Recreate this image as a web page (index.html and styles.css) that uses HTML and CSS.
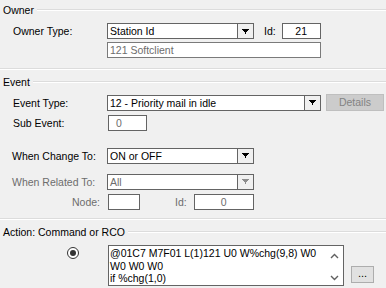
FILE: index.html
```html
<!DOCTYPE html>
<html>
<head>
<meta charset="utf-8">
<link rel="stylesheet" href="styles.css">
</head>
<body>
<div class="panel">
  <div class="legend l-owner"><span class="legend-text">Owner</span><span class="legend-line"></span></div>
  <div class="row r-owner">
    <span class="lbl">Owner Type:</span>
    <div class="combo c-short"><span class="val">Station Id</span><span class="dd"><svg width="7" height="5" viewBox="0 0 7 5"><path d="M0 0h7v1h-1v1h-1v1h-1v2h-1v-2h-1v-1h-1v-1h-1z" fill="#000"/></svg></span></div>
    <span class="lbl-id">Id:</span>
    <div class="field f-id">21</div>
  </div>
  <div class="row r-soft">
    <div class="field f-soft">121 Softclient</div>
  </div>
  <div class="sep s-owner"></div>

  <div class="legend l-event"><span class="legend-text">Event</span><span class="legend-line"></span></div>
  <div class="row r-evtype">
    <span class="lbl">Event Type:</span>
    <div class="combo c-long"><span class="val">12 - Priority mail in idle</span><span class="dd"><svg width="7" height="5" viewBox="0 0 7 5"><path d="M0 0h7v1h-1v1h-1v1h-1v2h-1v-2h-1v-1h-1v-1h-1z" fill="#000"/></svg></span></div>
    <div class="btn-details">Details</div>
  </div>
  <div class="row r-sub">
    <span class="lbl">Sub Event:</span>
    <div class="field f-sub">0</div>
  </div>
  <div class="row r-change">
    <span class="lbl lbl-dark">When Change To:</span>
    <div class="combo c-short"><span class="val">ON or OFF</span><span class="dd"><svg width="7" height="5" viewBox="0 0 7 5"><path d="M0 0h7v1h-1v1h-1v1h-1v2h-1v-2h-1v-1h-1v-1h-1z" fill="#000"/></svg></span></div>
  </div>
  <div class="row r-related">
    <span class="lbl lbl-dis">When Related To:</span>
    <div class="combo c-short disabled"><span class="val">All</span><span class="dd"><svg width="7" height="5" viewBox="0 0 7 5"><path d="M0 0h7v1h-1v1h-1v1h-1v2h-1v-2h-1v-1h-1v-1h-1z" fill="#8c8c8c"/></svg></span></div>
  </div>
  <div class="row r-node">
    <span class="lbl lbl-dis lbl-right">Node:</span>
    <div class="field f-node"></div>
    <span class="lbl-id2">Id:</span>
    <div class="field f-id2">0</div>
  </div>
  <div class="sep s-event"></div>

  <div class="legend l-action"><span class="legend-text">Action: Command or RCO</span><span class="legend-line"></span></div>
  <div class="row r-action">
    <span class="radio-col"><span class="radio"><span class="dot"></span></span></span>
    <div class="memo">
      <div class="memo-text">@01C7 M7F01 L(1)121 U0 W%chg(9,8) W0<br>W0 W0 W0<br>if %chg(1,0)</div>
      <div class="memo-scroll">
        <svg width="9" height="6" viewBox="0 0 9 6"><path d="M1 5L4.5 1.5L8 5" fill="none" stroke="#606060" stroke-width="1.4"/></svg>
        <svg width="9" height="6" viewBox="0 0 9 6"><path d="M1 1L4.5 4.5L8 1" fill="none" stroke="#606060" stroke-width="1.4"/></svg>
      </div>
    </div>
    <div class="btn-more">...</div>
  </div>
</div>
</body>
</html>
```

FILE: styles.css
```css
html, body {
  margin: 0;
  padding: 0;
  background: #f0f0f0;
}
body {
  font-family: "Liberation Sans", Arial, sans-serif;
  font-size: 10.5px;
  color: #000;
  width: 386px;
  height: 288px;
  overflow: hidden;
}
.panel {
  display: flex;
  flex-direction: column;
  width: 386px;
}
.legend {
  display: flex;
  align-items: center;
  height: 12px;
  line-height: 12px;
  padding-left: 3px;
}
.legend-text {
  margin-right: 3px;
  white-space: nowrap;
}
.legend-line {
  flex: 1;
  height: 1px;
  background: #dcdcdc;
  border-bottom: 1px solid #ffffff;
}
.l-owner { margin-top: 4px; }
.l-event { margin-top: 6px; }
.l-action { margin-top: 6px; }
.sep {
  height: 1px;
  background: #dcdcdc;
  border-bottom: 1px solid #ffffff;
}
.s-owner { margin-top: 11px; }
.s-event { margin-top: 8px; }

.row {
  display: flex;
  align-items: center;
  padding-left: 107px;
  position: relative;
}
.lbl {
  position: absolute;
  left: 13px;
  white-space: nowrap;
}
.lbl-dark { left: 12px; }
.lbl-dis { color: #6d6d6d; left: 12px; }
.lbl-right { left: auto; right: calc(386px - 100px); }

.r-owner { margin-top: 7px; height: 16px; }
.r-soft { margin-top: 3px; height: 15px; }
.r-evtype { margin-top: 6px; height: 17px; }
.r-sub { margin-top: 4px; height: 16px; }
.r-change { margin-top: 16px; height: 17px; }
.r-related { margin-top: 9px; height: 17px; }
.r-node { margin-top: 3px; height: 17px; }
.r-action { margin-top: 7px; height: 41px; align-items: flex-start; padding-left: 0; }

.combo {
  display: flex;
  box-sizing: border-box;
  height: 16px;
  border: 1px solid #646464;
  background: #fff;
}
.c-short { width: 147px; }
.c-long { width: 214px; }
.combo .val {
  flex: 1;
  padding-left: 2px;
  line-height: 14px;
  white-space: nowrap;
  overflow: hidden;
}
.combo .dd {
  width: 15px;
  border-left: 1px solid #646464;
  background: #f0f0f0;
  display: flex;
  align-items: center;
  justify-content: center;
}
.combo.disabled .val { color: #6d6d6d; }

.field {
  box-sizing: border-box;
  height: 16px;
  border: 1px solid #646464;
  background: #fff;
  line-height: 14px;
  white-space: nowrap;
}
.lbl-id { margin-left: 10px; margin-right: 6px; }
.f-id { width: 39px; text-align: center; }
.f-soft { width: 214px; color: #6d6d6d; padding-left: 2px; border-color: #7a7a7a; }
.f-sub { width: 39px; margin-left: 1px; color: #6d6d6d; padding-left: 7px; }
.f-node { width: 32px; margin-left: 1px; }
.lbl-id2 { margin-left: 35px; margin-right: 7px; color: #6d6d6d; }
.f-id2 { width: 60px; text-align: center; color: #6d6d6d; }

.btn-details {
  box-sizing: border-box;
  width: 58px;
  height: 17px;
  margin-left: 5px;
  background: #cccccc;
  border: 1px solid #bfbfbf;
  color: #838383;
  text-align: center;
  line-height: 15px;
}

.radio-col {
  width: 108px;
  display: flex;
  padding-top: 2px;
  padding-left: 67px;
  box-sizing: border-box;
}
.radio {
  box-sizing: border-box;
  width: 12px;
  height: 12px;
  border-radius: 50%;
  border: 1px solid #333;
  background: #fff;
  display: flex;
  align-items: center;
  justify-content: center;
}
.radio .dot {
  width: 6px;
  height: 6px;
  border-radius: 50%;
  background: #333;
}
.memo {
  box-sizing: border-box;
  width: 236px;
  height: 41px;
  border: 1px solid #646464;
  background: #fff;
  display: flex;
}
.memo-text {
  flex: 1;
  padding: 1px 0 0 1px;
  line-height: 12.5px;
  white-space: nowrap;
  overflow: hidden;
}
.memo-scroll {
  width: 17px;
  display: flex;
  flex-direction: column;
  justify-content: space-between;
  align-items: center;
  padding: 7px 0 4px;
  box-sizing: border-box;
}
.btn-more {
  box-sizing: border-box;
  width: 23px;
  height: 17px;
  margin-top: 21px;
  margin-left: 7px;
  border: 1px solid #adadad;
  background: #e1e1e1;
  text-align: center;
  line-height: 13px;
  font-size: 11px;
}
```
